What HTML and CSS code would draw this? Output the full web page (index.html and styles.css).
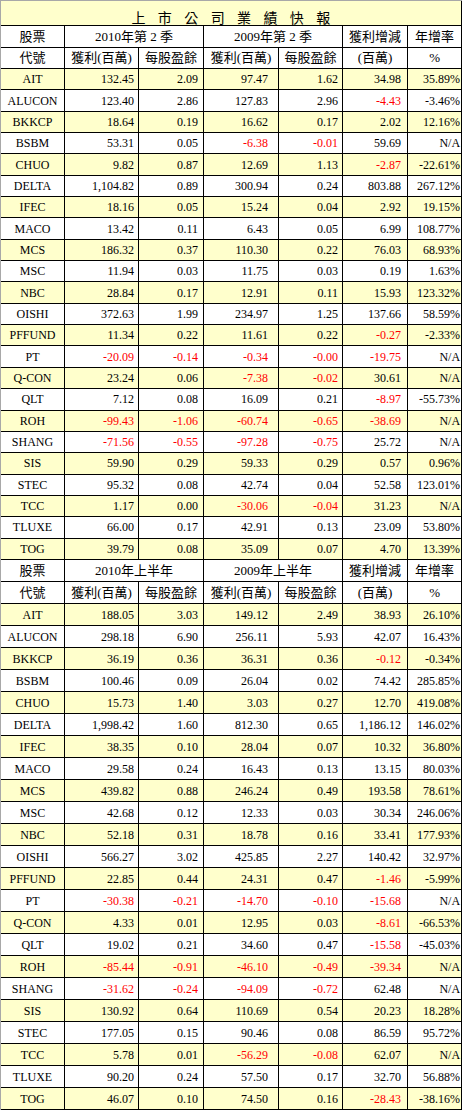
FILE: index.html
```html
<!DOCTYPE html>
<html lang="zh-Hant">
<head>
<meta charset="utf-8">
<title>上市公司業績快報</title>
<link rel="stylesheet" href="styles.css">
</head>
<body>
<table class="report">
<colgroup>
<col class="w1"><col class="w2"><col class="w3"><col class="w4"><col class="w5"><col class="w6"><col class="w7">
</colgroup>
<tbody>
<tr class="title"><td colspan="7">上市公司業績快報</td></tr>
<tr class="h1"><td>股票</td><td colspan="2">2010年第 2 季</td><td colspan="2">2009年第 2 季</td><td>獲利增減</td><td>年增率</td></tr>
<tr class="h2"><td>代號</td><td>獲利(百萬)</td><td>每股盈餘</td><td>獲利(百萬)</td><td>每股盈餘</td><td>(百萬)</td><td>%</td></tr>
<tr class="d a y"><td>AIT</td><td>132.45</td><td>2.09</td><td>97.47</td><td>1.62</td><td>34.98</td><td>35.89%</td></tr>
<tr class="d a"><td>ALUCON</td><td>123.40</td><td>2.86</td><td>127.83</td><td>2.96</td><td class="n">-4.43</td><td>-3.46%</td></tr>
<tr class="d a y"><td>BKKCP</td><td>18.64</td><td>0.19</td><td>16.62</td><td>0.17</td><td>2.02</td><td>12.16%</td></tr>
<tr class="d a"><td>BSBM</td><td>53.31</td><td>0.05</td><td class="n">-6.38</td><td class="n">-0.01</td><td>59.69</td><td>N/A</td></tr>
<tr class="d a y"><td>CHUO</td><td>9.82</td><td>0.87</td><td>12.69</td><td>1.13</td><td class="n">-2.87</td><td>-22.61%</td></tr>
<tr class="d a"><td>DELTA</td><td>1,104.82</td><td>0.89</td><td>300.94</td><td>0.24</td><td>803.88</td><td>267.12%</td></tr>
<tr class="d a y"><td>IFEC</td><td>18.16</td><td>0.05</td><td>15.24</td><td>0.04</td><td>2.92</td><td>19.15%</td></tr>
<tr class="d a"><td>MACO</td><td>13.42</td><td>0.11</td><td>6.43</td><td>0.05</td><td>6.99</td><td>108.77%</td></tr>
<tr class="d a y"><td>MCS</td><td>186.32</td><td>0.37</td><td>110.30</td><td>0.22</td><td>76.03</td><td>68.93%</td></tr>
<tr class="d a"><td>MSC</td><td>11.94</td><td>0.03</td><td>11.75</td><td>0.03</td><td>0.19</td><td>1.63%</td></tr>
<tr class="d a y"><td>NBC</td><td>28.84</td><td>0.17</td><td>12.91</td><td>0.11</td><td>15.93</td><td>123.32%</td></tr>
<tr class="d a"><td>OISHI</td><td>372.63</td><td>1.99</td><td>234.97</td><td>1.25</td><td>137.66</td><td>58.59%</td></tr>
<tr class="d a y"><td>PFFUND</td><td>11.34</td><td>0.22</td><td>11.61</td><td>0.22</td><td class="n">-0.27</td><td>-2.33%</td></tr>
<tr class="d a"><td>PT</td><td class="n">-20.09</td><td class="n">-0.14</td><td class="n">-0.34</td><td class="n">-0.00</td><td class="n">-19.75</td><td>N/A</td></tr>
<tr class="d a y"><td>Q-CON</td><td>23.24</td><td>0.06</td><td class="n">-7.38</td><td class="n">-0.02</td><td>30.61</td><td>N/A</td></tr>
<tr class="d a"><td>QLT</td><td>7.12</td><td>0.08</td><td>16.09</td><td>0.21</td><td class="n">-8.97</td><td>-55.73%</td></tr>
<tr class="d a y"><td>ROH</td><td class="n">-99.43</td><td class="n">-1.06</td><td class="n">-60.74</td><td class="n">-0.65</td><td class="n">-38.69</td><td>N/A</td></tr>
<tr class="d a"><td>SHANG</td><td class="n">-71.56</td><td class="n">-0.55</td><td class="n">-97.28</td><td class="n">-0.75</td><td>25.72</td><td>N/A</td></tr>
<tr class="d a y"><td>SIS</td><td>59.90</td><td>0.29</td><td>59.33</td><td>0.29</td><td>0.57</td><td>0.96%</td></tr>
<tr class="d a"><td>STEC</td><td>95.32</td><td>0.08</td><td>42.74</td><td>0.04</td><td>52.58</td><td>123.01%</td></tr>
<tr class="d a y"><td>TCC</td><td>1.17</td><td>0.00</td><td class="n">-30.06</td><td class="n">-0.04</td><td>31.23</td><td>N/A</td></tr>
<tr class="d a"><td>TLUXE</td><td>66.00</td><td>0.17</td><td>42.91</td><td>0.13</td><td>23.09</td><td>53.80%</td></tr>
<tr class="d a y"><td>TOG</td><td>39.79</td><td>0.08</td><td>35.09</td><td>0.07</td><td>4.70</td><td>13.39%</td></tr>
<tr class="h1 s2"><td>股票</td><td colspan="2">2010年上半年</td><td colspan="2">2009年上半年</td><td>獲利增減</td><td>年增率</td></tr>
<tr class="h2 s2"><td>代號</td><td>獲利(百萬)</td><td>每股盈餘</td><td>獲利(百萬)</td><td>每股盈餘</td><td>(百萬)</td><td>%</td></tr>
<tr class="d b y"><td>AIT</td><td>188.05</td><td>3.03</td><td>149.12</td><td>2.49</td><td>38.93</td><td>26.10%</td></tr>
<tr class="d b"><td>ALUCON</td><td>298.18</td><td>6.90</td><td>256.11</td><td>5.93</td><td>42.07</td><td>16.43%</td></tr>
<tr class="d b y"><td>BKKCP</td><td>36.19</td><td>0.36</td><td>36.31</td><td>0.36</td><td class="n">-0.12</td><td>-0.34%</td></tr>
<tr class="d b"><td>BSBM</td><td>100.46</td><td>0.09</td><td>26.04</td><td>0.02</td><td>74.42</td><td>285.85%</td></tr>
<tr class="d b y"><td>CHUO</td><td>15.73</td><td>1.40</td><td>3.03</td><td>0.27</td><td>12.70</td><td>419.08%</td></tr>
<tr class="d b"><td>DELTA</td><td>1,998.42</td><td>1.60</td><td>812.30</td><td>0.65</td><td>1,186.12</td><td>146.02%</td></tr>
<tr class="d b y"><td>IFEC</td><td>38.35</td><td>0.10</td><td>28.04</td><td>0.07</td><td>10.32</td><td>36.80%</td></tr>
<tr class="d b"><td>MACO</td><td>29.58</td><td>0.24</td><td>16.43</td><td>0.13</td><td>13.15</td><td>80.03%</td></tr>
<tr class="d b y"><td>MCS</td><td>439.82</td><td>0.88</td><td>246.24</td><td>0.49</td><td>193.58</td><td>78.61%</td></tr>
<tr class="d b"><td>MSC</td><td>42.68</td><td>0.12</td><td>12.33</td><td>0.03</td><td>30.34</td><td>246.06%</td></tr>
<tr class="d b y"><td>NBC</td><td>52.18</td><td>0.31</td><td>18.78</td><td>0.16</td><td>33.41</td><td>177.93%</td></tr>
<tr class="d b"><td>OISHI</td><td>566.27</td><td>3.02</td><td>425.85</td><td>2.27</td><td>140.42</td><td>32.97%</td></tr>
<tr class="d b y"><td>PFFUND</td><td>22.85</td><td>0.44</td><td>24.31</td><td>0.47</td><td class="n">-1.46</td><td>-5.99%</td></tr>
<tr class="d b"><td>PT</td><td class="n">-30.38</td><td class="n">-0.21</td><td class="n">-14.70</td><td class="n">-0.10</td><td class="n">-15.68</td><td>N/A</td></tr>
<tr class="d b y"><td>Q-CON</td><td>4.33</td><td>0.01</td><td>12.95</td><td>0.03</td><td class="n">-8.61</td><td>-66.53%</td></tr>
<tr class="d b"><td>QLT</td><td>19.02</td><td>0.21</td><td>34.60</td><td>0.47</td><td class="n">-15.58</td><td>-45.03%</td></tr>
<tr class="d b y"><td>ROH</td><td class="n">-85.44</td><td class="n">-0.91</td><td class="n">-46.10</td><td class="n">-0.49</td><td class="n">-39.34</td><td>N/A</td></tr>
<tr class="d b"><td>SHANG</td><td class="n">-31.62</td><td class="n">-0.24</td><td class="n">-94.09</td><td class="n">-0.72</td><td>62.48</td><td>N/A</td></tr>
<tr class="d b y"><td>SIS</td><td>130.92</td><td>0.64</td><td>110.69</td><td>0.54</td><td>20.23</td><td>18.28%</td></tr>
<tr class="d b"><td>STEC</td><td>177.05</td><td>0.15</td><td>90.46</td><td>0.08</td><td>86.59</td><td>95.72%</td></tr>
<tr class="d b y"><td>TCC</td><td>5.78</td><td>0.01</td><td class="n">-56.29</td><td class="n">-0.08</td><td>62.07</td><td>N/A</td></tr>
<tr class="d b"><td>TLUXE</td><td>90.20</td><td>0.24</td><td>57.50</td><td>0.17</td><td>32.70</td><td>56.88%</td></tr>
<tr class="d b y"><td>TOG</td><td>46.07</td><td>0.10</td><td>74.50</td><td>0.16</td><td class="n">-28.43</td><td>-38.16%</td></tr>
</tbody>
</table>
</body>
</html>
```
FILE: styles.css
```css
html, body {
  margin: 0;
  padding: 0;
  background: #ffffff;
}

.report {
  border-collapse: separate;
  border-spacing: 0;
  table-layout: fixed;
  width: 462px;
  border-left: 1px solid #a8a8a8;
  border-top: 1px solid #a8a8a8;
  font-family: "Liberation Serif", "Noto Sans CJK TC", serif;
  font-size: 12px;
  color: #000000;
}

.w1 { width: 64px; }
.w2 { width: 74px; }
.w3 { width: 65px; }
.w4 { width: 75px; }
.w5 { width: 64px; }
.w6 { width: 65px; }
.w7 { width: 54px; }

.report td {
  box-sizing: border-box;
  border-right: 1px solid #000000;
  border-bottom: 1px solid #000000;
  padding: 0;
  line-height: 14px;
  white-space: nowrap;
  overflow: hidden;
  vertical-align: middle;
}

.title { height: 25px; }
.title td {
  background: #ffffcc;
  text-align: center;
  vertical-align: bottom;
  padding: 0 0 1px 12px;
  font-family: "Noto Sans CJK TC", sans-serif;
  font-size: 14px;
  letter-spacing: 12.4px;
}

.h1 { height: 22px; }
.h2 { height: 21px; }
.s2.h1 { height: 22.5px; }
.s2.h2 { height: 21.7px; }

.h1 td, .h2 td {
  text-align: center;
  font-size: 13px;
  background: #ffffff;
}

.d.a { height: 21.348px; }
.d.b { height: 22px; }

.d td {
  text-align: right;
  background: #ffffff;
}
.d.y td { background: #ffffcc; }

.d td:nth-child(1) { text-align: center; }
.d td:nth-child(2) { padding-right: 4px; }
.d td:nth-child(3) { padding-right: 5px; }
.d td:nth-child(4) { padding-right: 10px; }
.d td:nth-child(5) { padding-right: 4px; }
.d td:nth-child(6) { padding-right: 6px; }
.d td:nth-child(7) { padding-right: 1px; }

.d td.n { color: #ff0000; }
```
